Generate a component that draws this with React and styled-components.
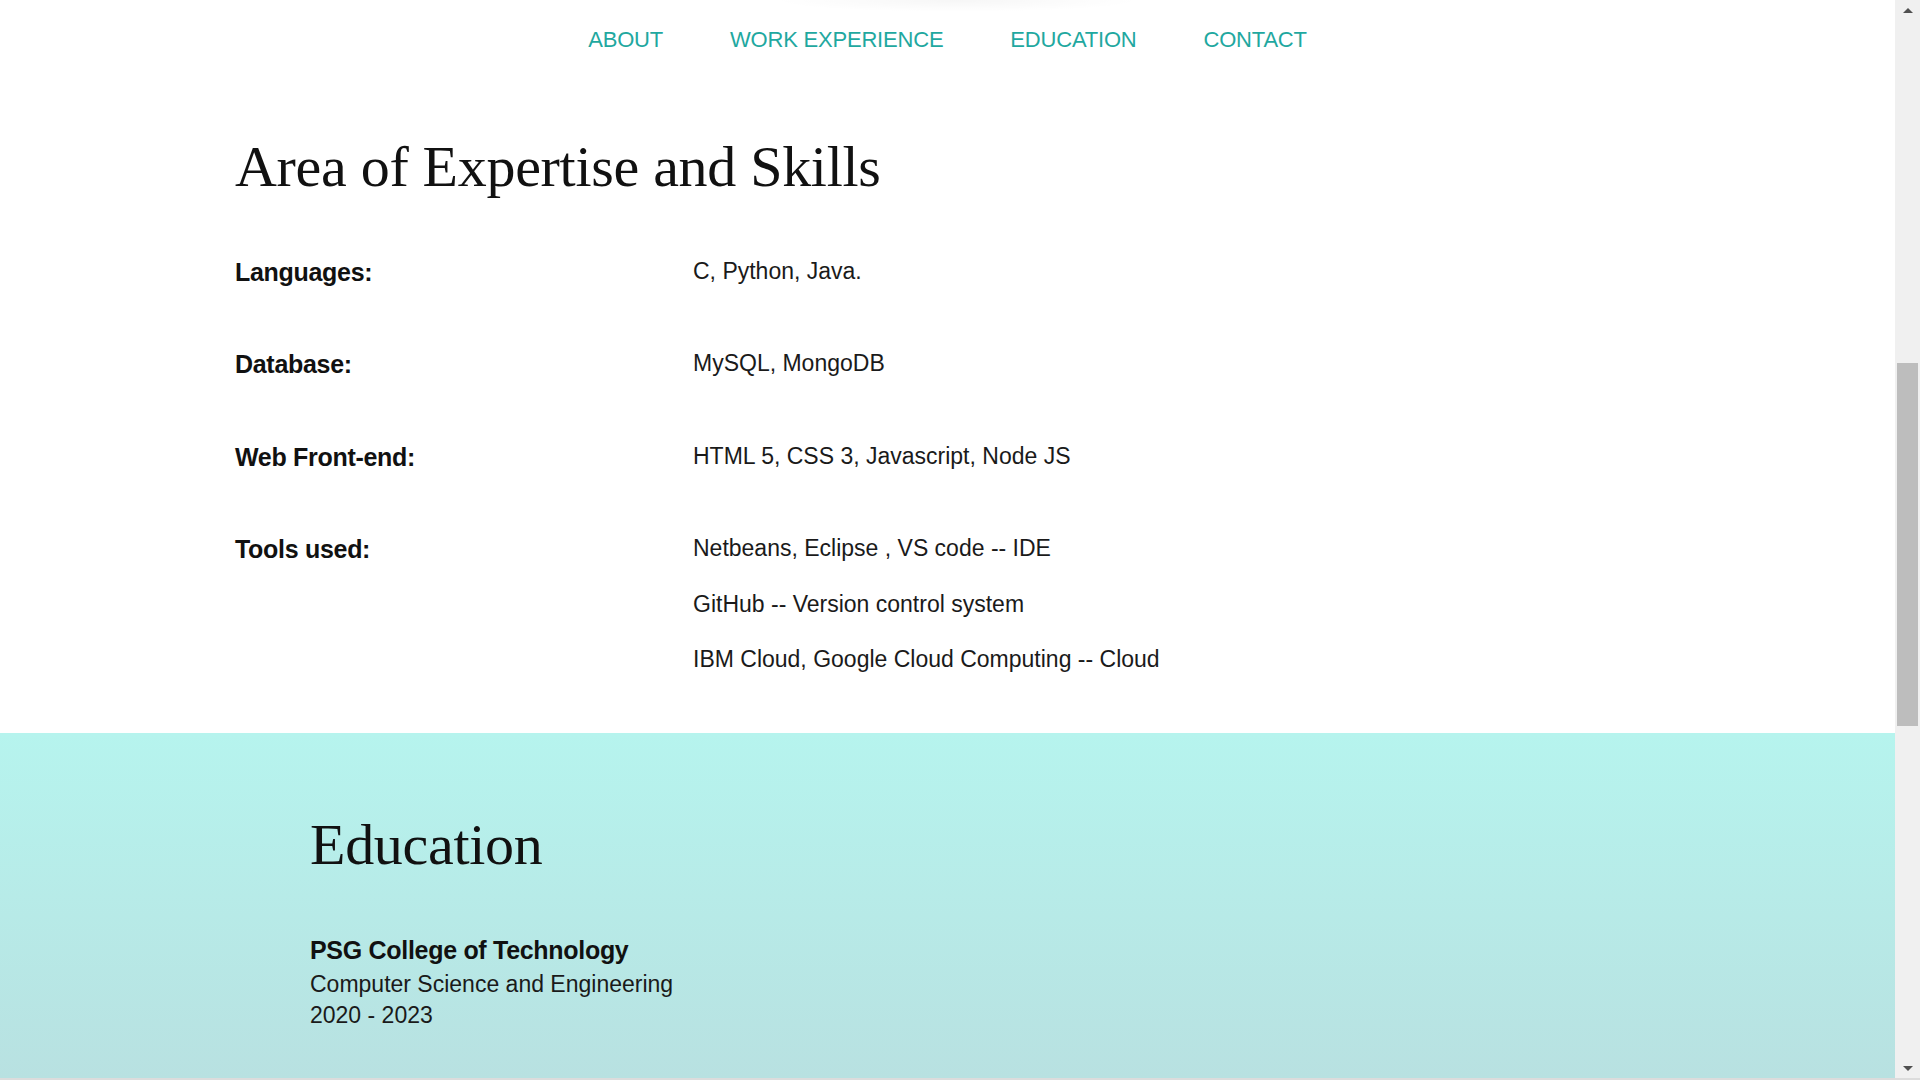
import React from 'react'
import styled, {createGlobalStyle} from 'styled-components'

const GlobalStyle = createGlobalStyle`
    html, body {
        margin: 0;
        padding: 0;
        overflow: hidden;
        background: #fff;
    }

    * {
        box-sizing: border-box;
    }
`

const Frame = styled.div`
    display: flex;
    height: 1080px;
    border-bottom: 2px solid #dcdcdc;
    font-family: 'Liberation Sans', Arial, sans-serif;
    color: #111;
`

const Page = styled.main`
    flex: 1;
    min-width: 0;
    overflow: hidden;
    display: flex;
    flex-direction: column;
`

const NavBar = styled.nav`
    height: 80px;
    display: flex;
    justify-content: center;
    align-items: center;
    gap: 67px;
    flex-shrink: 0;
    background: radial-gradient(ellipse 185px 12px at 50.5% 0, rgba(0, 0, 0, 0.035), rgba(0, 0, 0, 0));
`

const NavLink = styled.a`
    font-size: 22px;
    line-height: 30px;
    color: #1fa8a0;
    text-decoration: none;
    text-transform: uppercase;
    letter-spacing: -0.2px;
`

const SkillsSection = styled.section`
    padding: 52px 0 59px 235px;
`

const Heading = styled.h2`
    margin: 0;
    font-family: 'Liberation Serif', 'Times New Roman', serif;
    font-weight: 400;
    font-size: 58px;
    line-height: 69.6px;
    color: #111;
    letter-spacing: -0.3px;
`

const SkillList = styled.div`
    display: flex;
    flex-direction: column;
    gap: 59.5px;
    margin-top: 52px;
`

const SkillRow = styled.div`
    display: grid;
    grid-template-columns: 458px 1fr;
    align-items: start;
`

const Label = styled.div`
    font-size: 25px;
    font-weight: 700;
    line-height: 30px;
    margin-top: 3px;
    letter-spacing: -0.3px;
`

const Values = styled.div`
    display: flex;
    flex-direction: column;
    gap: 25.5px;
    padding-top: 2px;
`

const Value = styled.div`
    font-size: 23px;
    line-height: 30px;
    color: #1a1a1a;
`

const EducationSection = styled.section`
    flex: 1;
    padding: 77px 0 0 310px;
    background: linear-gradient(180deg, #b6f4ee 0%, #b8e1e1 100%);
`

const School = styled.div`
    margin-top: 55px;
    font-size: 25px;
    font-weight: 700;
    line-height: 30px;
    letter-spacing: -0.3px;
`

const Details = styled.div`
    margin-top: 4px;
    font-size: 23px;
    line-height: 31px;
    color: #1a1a1a;
`

const ScrollTrack = styled.div`
    width: 25px;
    flex-shrink: 0;
    background: #f0f0f0;
    display: flex;
    flex-direction: column;
    align-items: center;
`

const ScrollArrow = styled.div`
    height: 20px;
    width: 100%;
    display: flex;
    justify-content: center;
    align-items: center;
`

const Triangle = styled.div`
    width: 0;
    height: 0;
    border-left: 5px solid transparent;
    border-right: 5px solid transparent;
    ${({down}) => (down ? 'border-top: 5px solid #505050;' : 'border-bottom: 5px solid #505050;')}
`

const ThumbSpace = styled.div`
    flex: 1;
    width: 100%;
    padding: 343px 2px 0 2px;
`

const Thumb = styled.div`
    height: 363px;
    background: #bdbdbd;
`

const skills = [
    {label: 'Languages:', values: ['C, Python, Java.']},
    {label: 'Database:', values: ['MySQL, MongoDB']},
    {label: 'Web Front-end:', values: ['HTML 5, CSS 3, Javascript, Node JS']},
    {
        label: 'Tools used:',
        values: [
            'Netbeans, Eclipse , VS code -- IDE',
            'GitHub -- Version control system',
            'IBM Cloud, Google Cloud Computing -- Cloud'
        ]
    }
]

const navItems = ['About', 'Work Experience', 'Education', 'Contact']

const App = () =>
    <>
        <GlobalStyle />
        <Frame>
            <Page>
                <NavBar>
                    {navItems.map(item =>
                        <NavLink key={item} href={`#${item.toLowerCase().replace(' ', '-')}`}>
                            {item}
                        </NavLink>
                    )}
                </NavBar>
                <SkillsSection>
                    <Heading>Area of Expertise and Skills</Heading>
                    <SkillList>
                        {skills.map(skill =>
                            <SkillRow key={skill.label}>
                                <Label>{skill.label}</Label>
                                <Values>
                                    {skill.values.map(v => <Value key={v}>{v}</Value>)}
                                </Values>
                            </SkillRow>
                        )}
                    </SkillList>
                </SkillsSection>
                <EducationSection>
                    <Heading>Education</Heading>
                    <School>PSG College of Technology</School>
                    <Details>
                        <div>Computer Science and Engineering</div>
                        <div>2020 - 2023</div>
                    </Details>
                </EducationSection>
            </Page>
            <ScrollTrack>
                <ScrollArrow>
                    <Triangle />
                </ScrollArrow>
                <ThumbSpace>
                    <Thumb />
                </ThumbSpace>
                <ScrollArrow>
                    <Triangle down />
                </ScrollArrow>
            </ScrollTrack>
        </Frame>
    </>

export default App
